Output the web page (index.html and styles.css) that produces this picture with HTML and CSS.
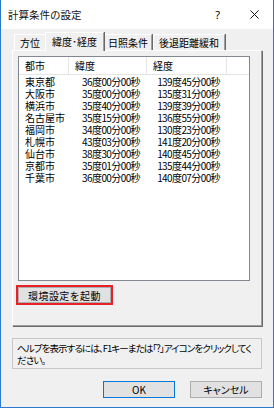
FILE: index.html
```html
<!DOCTYPE html>
<html lang="ja">
<head>
    <meta charset="UTF-8">
    <title>計算条件の設定</title>
    <link rel="stylesheet" href="styles.css">
</head>
<body>
    <div class="window">
        <div class="titlebar">
            <span class="title">計算条件の設定</span>
            <span class="title-help">?</span>
            <svg class="title-close" viewBox="0 0 10 10">
                <path d="M0.5 0.5 L9.5 9.5 M9.5 0.5 L0.5 9.5"/>
            </svg>
        </div>

        <div class="content">
            <div class="tabs">
                <div class="tab">方位</div>
                <div class="tab active">緯度･経度</div>
                <div class="tab">日照条件</div>
                <div class="tab">後退距離緩和</div>
            </div>

            <div class="panel">
                <div class="listview">
                    <div class="list-header">
                        <div class="col">都市</div>
                        <div class="col">緯度</div>
                        <div class="col">経度</div>
                        <div class="col"></div>
                    </div>
                    <div class="list-body" id="rows"></div>
                </div>

                <div class="highlight">
                    <button class="btn btn-env">環境設定を起動</button>
                </div>
            </div>

            <div class="helpbox">
                ヘルプを表示するには、F1キーまたは「?」アイコンをクリックしてく<br>ださい。
            </div>

            <div class="actions">
                <button class="btn btn-default">OK</button>
                <button class="btn">キャンセル</button>
            </div>
        </div>
    </div>

    <script>
        // City list data
        const cities = [
            ['東京都', '36度00分00秒', '139度45分00秒'],
            ['大阪市', '35度00分00秒', '135度31分00秒'],
            ['横浜市', '35度40分00秒', '139度39分00秒'],
            ['名古屋市', '35度15分00秒', '136度55分00秒'],
            ['福岡市', '34度00分00秒', '130度23分00秒'],
            ['札幌市', '43度03分00秒', '141度20分00秒'],
            ['仙台市', '38度30分00秒', '140度45分00秒'],
            ['京都市', '35度01分00秒', '135度44分00秒'],
            ['千葉市', '36度00分00秒', '140度07分00秒']
        ];

        const rows = document.getElementById('rows');

        cities.forEach(city => {
            const row = document.createElement('div');
            row.className = 'row';
            row.innerHTML =
                '<div class="cell">' + city[0] + '</div>' +
                '<div class="cell num">' + city[1] + '</div>' +
                '<div class="cell num">' + city[2] + '</div>';
            rows.appendChild(row);
        });
    </script>
</body>
</html>
```

FILE: styles.css
```css
* {
    margin: 0;
    padding: 0;
    box-sizing: border-box;
}

body {
    font-family: "Noto Sans CJK JP", "Noto Sans", sans-serif;
    font-size: 10px;
    color: #000;
    background: #f0f0f0;
}

.window {
    width: 274px;
    height: 408px;
    background: #f0f0f0;
    border: 1px solid #2b79d0;
    border-top: none;
    display: flex;
    flex-direction: column;
}

.titlebar {
    height: 29px;
    background: #fff;
    display: flex;
    align-items: center;
    padding-left: 7px;
}

.title {
    font-size: 10.5px;
    flex: 1;
    color: #111;
}

.title-help {
    font-family: "Noto Sans", sans-serif;
    font-size: 11px;
    margin-right: 30px;
}

.title-close {
    width: 9px;
    height: 9px;
    margin-right: 14px;
    stroke: #111;
    stroke-width: 1.1;
    fill: none;
}

.content {
    flex: 1;
    padding: 0 11px 0 11px;
    display: flex;
    flex-direction: column;
}

/* tab strip */
.tabs {
    display: flex;
    align-items: flex-end;
    height: 21px;
    padding-left: 2px;
}

.tab {
    height: 16px;
    line-height: 15px;
    font-size: 10px;
    padding: 0 5px;
    background: #f0f0f0;
    border-top: 1px solid #fff;
    border-left: 1px solid #fff;
    border-right: 1px solid #a0a0a0;
    box-shadow: 1px 0 0 #696969;
    margin-right: 1px;
    white-space: nowrap;
}

.tab.active {
    height: 19px;
    line-height: 17px;
    padding: 0 6px;
    margin: 0 -1px -1px -2px;
    position: relative;
    z-index: 1;
}

.tab.active + .tab {
    margin-left: 1px;
    padding: 0 3px;
}

/* tab page */
.panel {
    height: 276px;
    width: 250px;
    border-top: 1px solid #fff;
    border-left: 1px solid #fff;
    border-right: 1px solid #a0a0a0;
    border-bottom: 1px solid #a0a0a0;
    box-shadow: 1px 1px 0 #696969;
    padding: 5px 0 0 5px;
}

.listview {
    width: 232px;
    height: 225px;
    background: #fff;
    border: 1px solid #828790;
}

.list-header {
    display: grid;
    grid-template-columns: 50px 78px 80px 1fr;
    height: 18px;
    border-bottom: 1px solid #e5e5e5;
}

.list-header .col {
    border-right: 1px solid #e5e5e5;
    line-height: 17px;
    padding-left: 6px;
}

.list-header .col:last-child {
    border-right: none;
}

.row {
    display: grid;
    grid-template-columns: 50px 78px 80px;
    height: 12px;
    line-height: 12px;
}

.row:first-child {
    margin-top: 1px;
}

.cell {
    padding-left: 6px;
    white-space: nowrap;
}

.cell.num {
    text-align: right;
    padding-right: 7px;
    letter-spacing: -0.6px;
}

.highlight {
    margin: 4px 0 0 -2px;
    width: 97px;
    height: 20px;
    border: 2px solid #e8202a;
    padding: 0;
}

.btn {
    font-family: "Noto Sans CJK JP", "Noto Sans", sans-serif;
    font-size: 10px;
    color: #000;
    background: #e1e1e1;
    border: 1px solid #adadad;
    height: 17px;
    line-height: 15px;
}

.btn-env {
    width: 93px;
    height: 16px;
    letter-spacing: 0.4px;
}

.helpbox {
    margin-top: 12px;
    height: 31px;
    width: 250px;
    border: 1px solid #c8c8c8;
    padding: 3px 0 0 4px;
    line-height: 12px;
    font-size: 9.5px;
    font-feature-settings: "palt";
    letter-spacing: -0.9px;
    white-space: nowrap;
}

.actions {
    display: flex;
    justify-content: flex-end;
    gap: 15px;
    margin-top: 12px;
    padding-right: 0;
}

.actions .btn {
    width: 72px;
    height: 17px;
    font-feature-settings: "palt";
}

.btn-default {
    border-color: #0078d7;
}
```
